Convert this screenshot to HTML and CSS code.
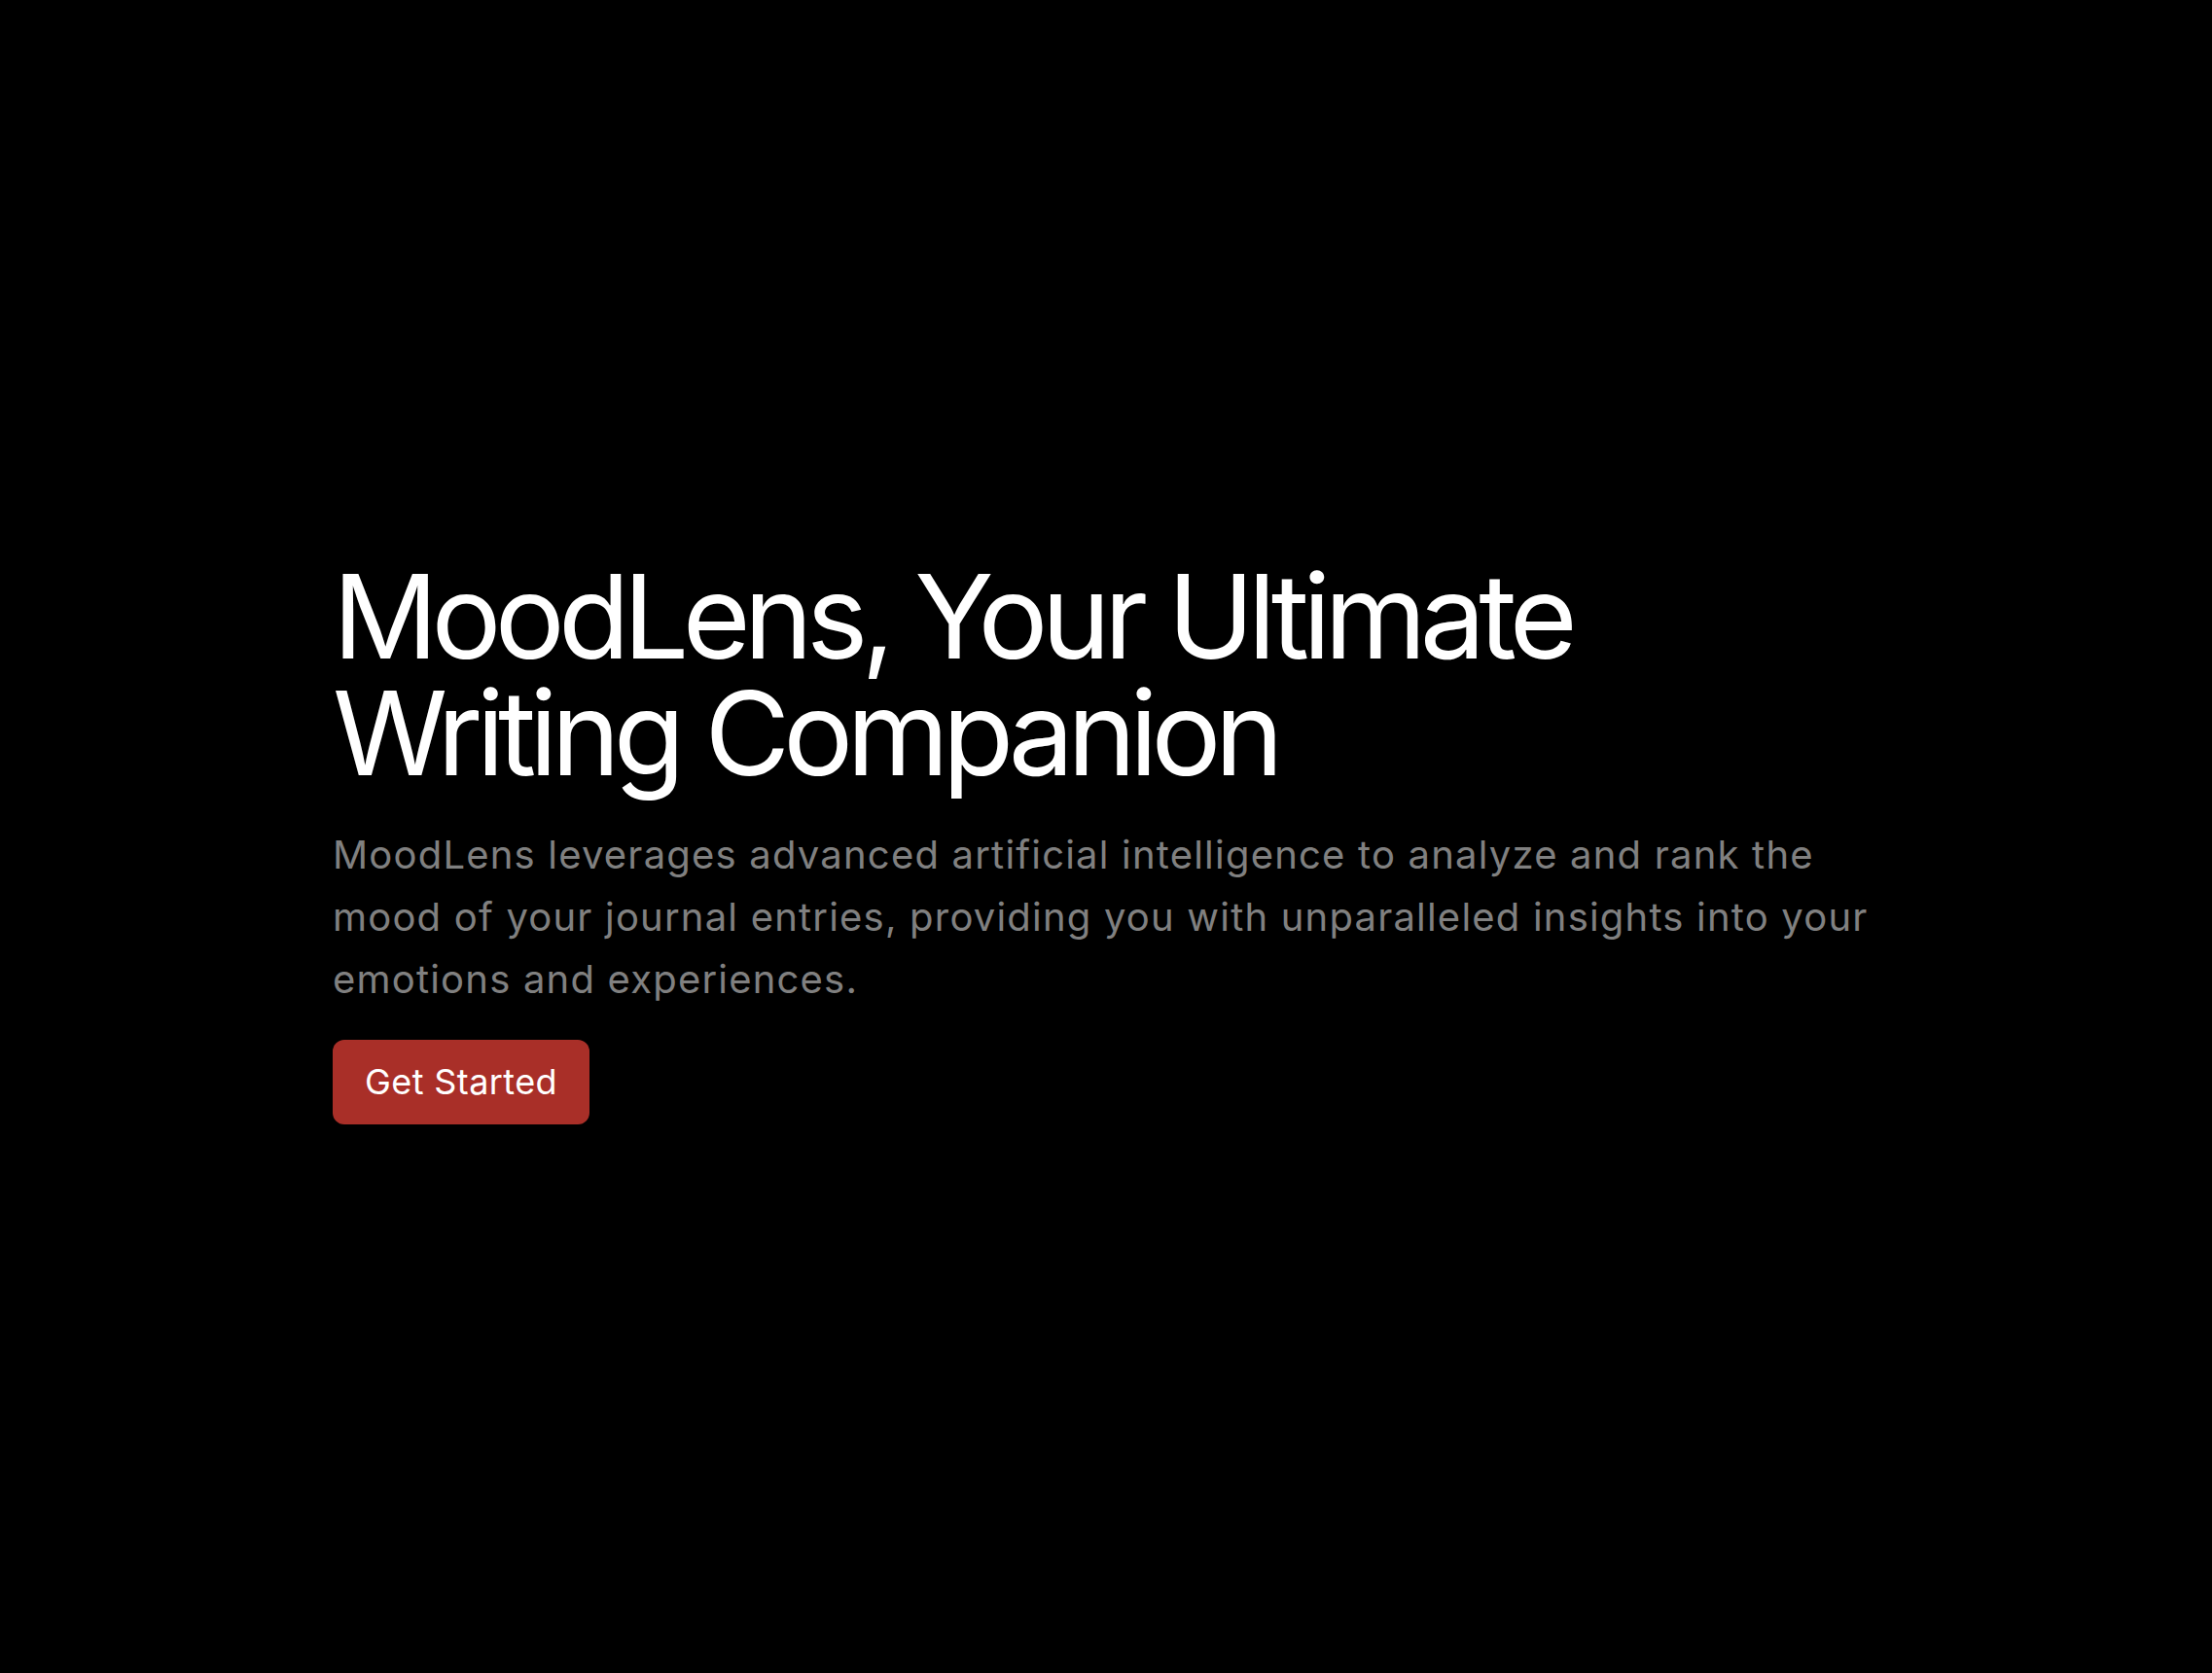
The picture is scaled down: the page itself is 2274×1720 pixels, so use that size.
FILE: index.html
```html
<!DOCTYPE html>
<html lang="en">
<head>
<meta charset="utf-8">
<title>MoodLens</title>
<link rel="stylesheet" href="styles.css">
</head>
<body>
<main class="hero">
  <div class="hero-inner">
    <h1 class="hero-title">MoodLens, Your Ultimate Writing Companion</h1>
    <p class="hero-text">MoodLens leverages advanced artificial intelligence to analyze and rank the mood of your journal entries, providing you with unparalleled insights into your emotions and experiences.</p>
    <a class="hero-btn" href="#">Get Started</a>
  </div>
</main>
</body>
</html>
```

FILE: styles.css
```css
* { box-sizing: border-box; }
html, body {
  margin: 0;
  padding: 0;
  background: #000;
}
body {
  font-family: Inter, "Noto Sans", sans-serif;
  color: #fff;
}
.hero {
  min-height: 100vh;
  padding: 9px 0 0 6px;
  display: flex;
  align-items: center;
  justify-content: center;
}
.hero-inner {
  width: 1596px;
  padding-right: 6px;
  display: flex;
  flex-direction: column;
  align-items: flex-start;
}
.hero-title {
  margin: 0;
  font-size: 120px;
  line-height: 120px;
  font-weight: 400;
  letter-spacing: -6.8px;
}
.hero-text {
  margin: 33px -6px 30px 0;
  font-size: 40px;
  line-height: 64px;
  color: #808080;
  letter-spacing: 1.2px;
}
.hero-btn {
  display: inline-block;
  background: #a92f28;
  color: #fff;
  text-decoration: none;
  font-size: 36px;
  line-height: 55px;
  padding: 16px 33px;
  border-radius: 12px;
  letter-spacing: 0.4px;
}
```
